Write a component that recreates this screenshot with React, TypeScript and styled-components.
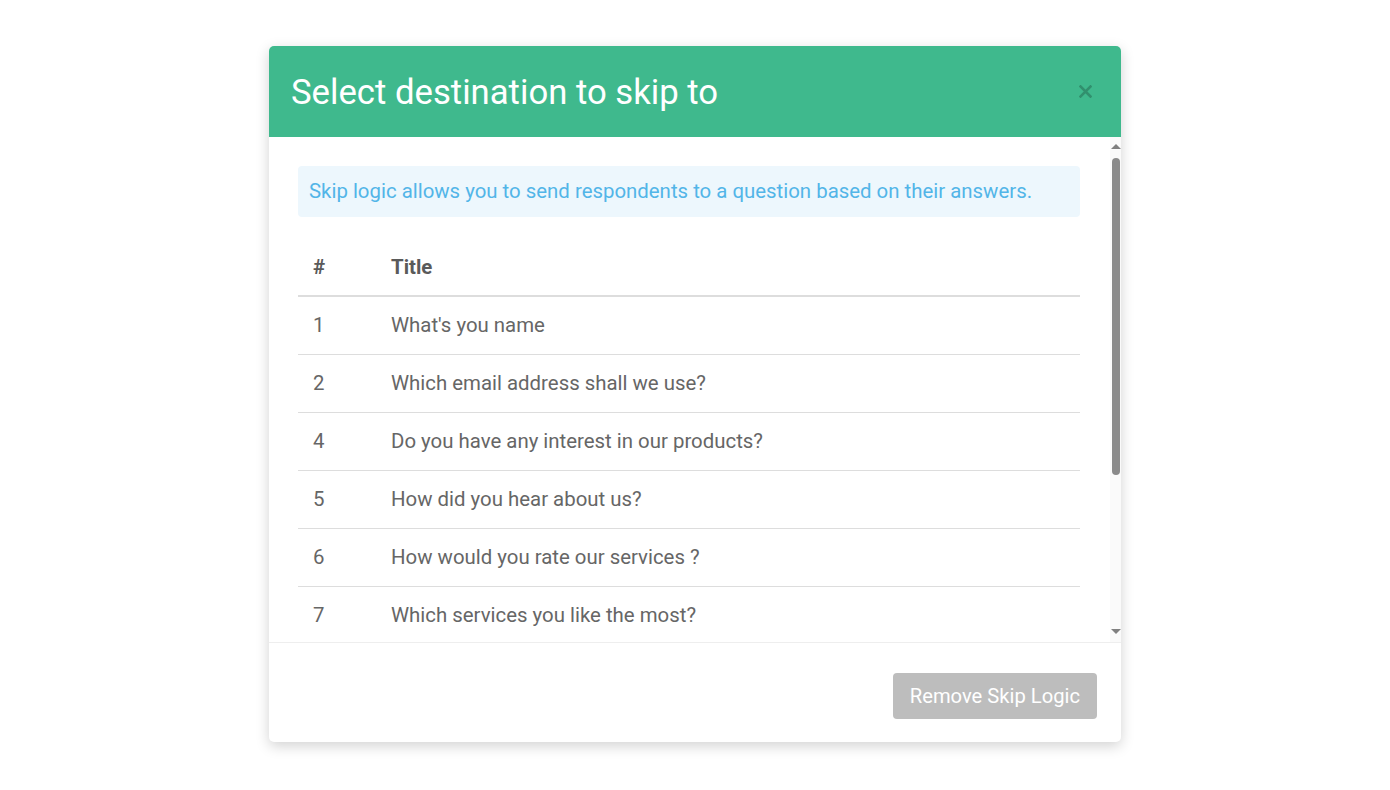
import styled, { createGlobalStyle } from "styled-components"

const GlobalStyle = createGlobalStyle`
    html, body {
        margin: 0;
        padding: 0;
        background: #fff;
        font-family: Roboto, "Liberation Sans", sans-serif;
    }
    * {
        box-sizing: border-box;
    }
`

const Page = styled.div`
    width: 1390px;
    height: 790px;
    display: flex;
    justify-content: center;
    padding-top: 46px;
`

const Modal = styled.div`
    width: 852px;
    height: 696px;
    background: #fff;
    border-radius: 5px;
    box-shadow: 0 4px 14px rgba(0, 0, 0, 0.18);
    display: flex;
    flex-direction: column;
    overflow: hidden;
`

const Header = styled.div`
    height: 91px;
    flex-shrink: 0;
    background: #3fb98d;
    display: flex;
    align-items: center;
    justify-content: space-between;
    padding: 0 28px 0 22px;

    & h2 {
        margin: 0;
        color: #fff;
        font-size: 34.7px;
        font-weight: 400;
    }
`

const CloseButton = styled.button`
    border: none;
    background: none;
    padding: 0;
    cursor: pointer;
    color: rgba(0, 0, 0, 0.22);
    width: 16px;
    height: 16px;
    display: flex;
    align-items: center;
    justify-content: center;
`

const BodyWrap = styled.div`
    flex: 1;
    min-height: 0;
    display: flex;
`

const Body = styled.div`
    flex: 1;
    overflow-y: auto;
    scrollbar-width: none;
    padding: 29px 30px 20px 29px;
`

const ScrollTrack = styled.div`
    width: 11px;
    flex-shrink: 0;
    background: #fafafa;
    display: flex;
    flex-direction: column;
    align-items: center;
    padding: 7px 0 8px;
`

const Arrow = styled.div<{ $down?: boolean }>`
    width: 0;
    height: 0;
    border-left: 5px solid transparent;
    border-right: 5px solid transparent;
    ${(p) => (p.$down ? "border-top: 5px solid #808080;" : "border-bottom: 5px solid #808080;")}
    flex-shrink: 0;
`

const ThumbArea = styled.div`
    flex: 1;
    width: 100%;
    padding: 9px 1px 0 2px;
`

const Thumb = styled.div`
    width: 8px;
    background: #8a8a8a;
    border-radius: 4px;
`

const Alert = styled.div`
    background: #edf7fd;
    color: #52b5e8;
    border-radius: 4px;
    padding: 13px 11px;
    font-size: 20.4px;
    line-height: 25px;
    margin-bottom: 21px;
`

const Table = styled.table`
    width: 100%;
    border-collapse: collapse;
    font-size: 20.4px;
    color: #666;
`

const HeadCell = styled.th<{ $narrow?: boolean }>`
    text-align: left;
    font-weight: 700;
    color: #5a5a5a;
    height: 58px;
    padding: 0 15px;
    border-bottom: 2px solid #ddd;
    width: ${(p) => (p.$narrow ? "78px" : "auto")};
`

const Row = styled.tr`
    & + & td {
        border-top: 1px solid #ddd;
    }
`

const Cell = styled.td`
    height: 58px;
    padding: 0 15px;
    vertical-align: middle;
`

const Footer = styled.div`
    height: 100px;
    flex-shrink: 0;
    border-top: 1px solid #eee;
    display: flex;
    align-items: center;
    justify-content: flex-end;
    padding: 0 24px 0 0;
`

const RemoveButton = styled.button`
    border: none;
    background: #bdbdbd;
    color: #fff;
    font-family: Roboto, "Liberation Sans", sans-serif;
    font-size: 20.2px;
    height: 46px;
    padding: 0 17px;
    border-radius: 4px;
    margin-top: 6px;
    cursor: pointer;
`

const questions = [
    { id: 1, title: "What's you name" },
    { id: 2, title: "Which email address shall we use?" },
    { id: 4, title: "Do you have any interest in our products?" },
    { id: 5, title: "How did you hear about us?" },
    { id: 6, title: "How would you rate our services ?" },
    { id: 7, title: "Which services you like the most?" },
]

const App = () => {
    return (
        <Page>
            <GlobalStyle />
            <Modal>
                <Header>
                    <h2>Select destination to skip to</h2>
                    <CloseButton aria-label="Close">
                        <svg width="13" height="13" viewBox="0 0 13 13">
                            <path d="M1.5 1.5 L11.5 11.5 M11.5 1.5 L1.5 11.5" stroke="currentColor" strokeWidth="2.6" strokeLinecap="square" />
                        </svg>
                    </CloseButton>
                </Header>
                <BodyWrap>
                    <Body>
                        <Alert>Skip logic allows you to send respondents to a question based on their answers.</Alert>
                        <Table>
                            <thead>
                                <tr>
                                    <HeadCell $narrow>#</HeadCell>
                                    <HeadCell>Title</HeadCell>
                                </tr>
                            </thead>
                            <tbody>
                                {questions.map((q) => (
                                    <Row key={q.id}>
                                        <Cell>{q.id}</Cell>
                                        <Cell>{q.title}</Cell>
                                    </Row>
                                ))}
                            </tbody>
                        </Table>
                    </Body>
                    <ScrollTrack>
                        <Arrow />
                        <ThumbArea>
                            <Thumb style={{ height: 317 }} />
                        </ThumbArea>
                        <Arrow $down />
                    </ScrollTrack>
                </BodyWrap>
                <Footer>
                    <RemoveButton>Remove Skip Logic</RemoveButton>
                </Footer>
            </Modal>
        </Page>
    )
}

export default App
